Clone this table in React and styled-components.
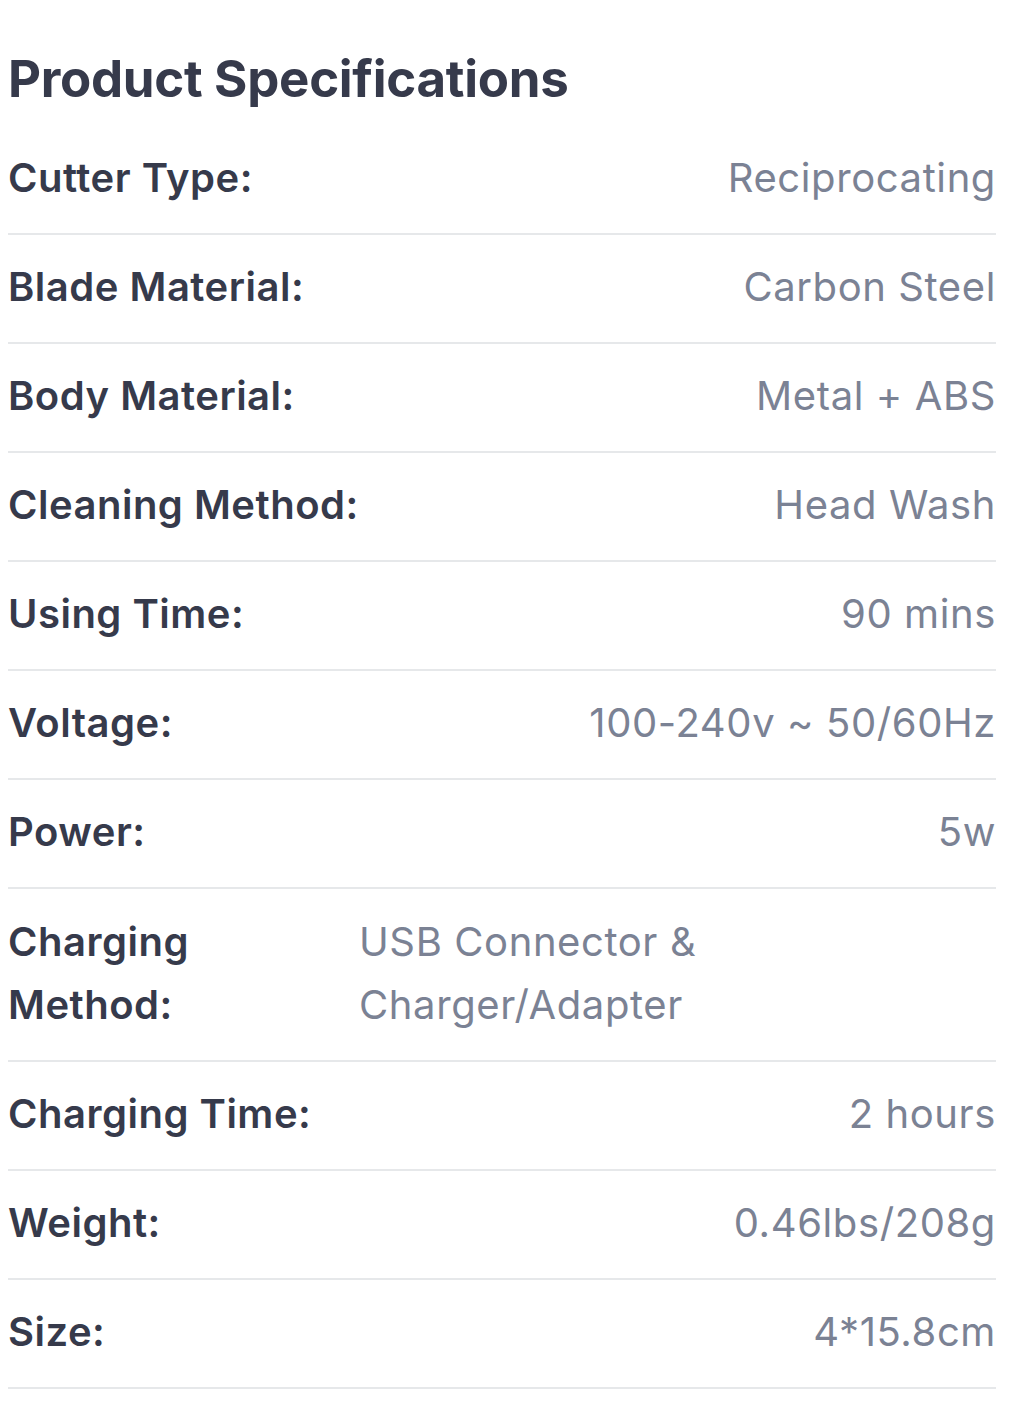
import styled, { createGlobalStyle } from 'styled-components';

const specs = [
    ['Cutter Type:', 'Reciprocating'],
    ['Blade Material:', 'Carbon Steel'],
    ['Body Material:', 'Metal + ABS'],
    ['Cleaning Method:', 'Head Wash'],
    ['Using Time:', '90 mins'],
    ['Voltage:', '100-240v ~ 50/60Hz'],
    ['Power:', '5w'],
    ['Charging Method:', 'USB Connector & Charger/Adapter', true],
    ['Charging Time:', '2 hours'],
    ['Weight:', '0.46lbs/208g'],
    ['Size:', '4*15.8cm'],
];

const App = () => {
    return (
        <>
            <GlobalStyle />
            <SpecsContainer>
                <Title>Product Specifications</Title>
                <SpecList>
                    {specs.map(([label, value, wrap]) => (
                        <SpecRow key={label}>
                            <SpecLabel $wrap={wrap}>{label}</SpecLabel>
                            <SpecValue $wrap={wrap}>{value}</SpecValue>
                        </SpecRow>
                    ))}
                </SpecList>
            </SpecsContainer>
        </>
    )
}

export default App;

const GlobalStyle = createGlobalStyle`
    body {
        margin: 0;
        background-color: #ffffff;
        font-family: Inter, Roboto, "Liberation Sans", sans-serif;
    }
`;

const SpecsContainer = styled.div`
    width: 988px;
    padding: 47px 0 0 8px;
`;

const Title = styled.h2`
    margin: 0 0 15px 0;
    font-size: 51px;
    line-height: 64px;
    font-weight: 700;
    letter-spacing: -0.3px;
    color: #363a4b;
`;

const SpecList = styled.div`
    display: flex;
    flex-direction: column;
`;

const SpecRow = styled.div`
    display: flex;
    align-items: flex-start;
    justify-content: space-between;
    padding: 21px 0 24px 0;
    border-bottom: 2px solid #e6e8ea;
`;

const SpecLabel = styled.div`
    font-size: 40px;
    line-height: ${({ $wrap }) => ($wrap ? '63px' : '62px')};
    font-weight: 600;
    letter-spacing: 0.5px;
    color: #363a4b;
    ${({ $wrap }) => $wrap && `
        flex: 0 0 351px;
        padding-right: 60px;
        box-sizing: border-box;
    `}
`;

const SpecValue = styled.div`
    font-size: 40px;
    line-height: ${({ $wrap }) => ($wrap ? '63px' : '62px')};
    font-weight: 400;
    letter-spacing: 0.6px;
    color: #7b8294;
    text-align: right;
    ${({ $wrap }) => $wrap && `
        flex: 1;
        max-width: 380px;
        margin-right: auto;
        text-align: left;
    `}
`;
